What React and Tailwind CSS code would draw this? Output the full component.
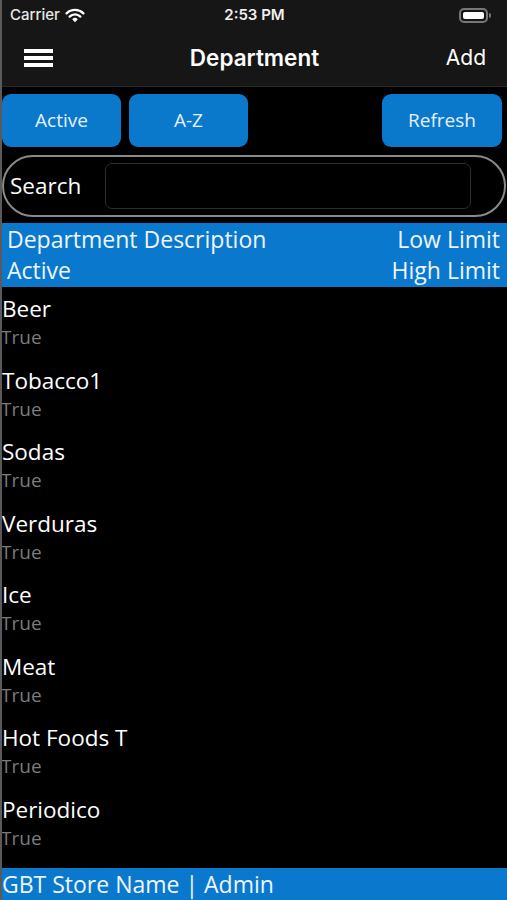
import React from "react";

const items = ["Beer", "Tobacco1", "Sodas", "Verduras", "Ice", "Meat", "Hot Foods T", "Periodico"];

export default function App() {
  return (
    <div className="w-[507px] h-[900px] bg-black text-white overflow-hidden flex flex-col border-l-2 border-[#5a5a5a]" style={{ fontFamily: '"Open Sans", "Noto Sans", sans-serif' }}>
      {/* status + nav */}
      <div className="bg-[#161616] h-[87px] flex flex-col border-b border-[#2a2a2a]" style={{ fontFamily: 'Inter, "Liberation Sans", sans-serif' }}>
        <div className="h-[30px] flex items-center px-[8px] relative">
          <div className="flex items-center gap-[5px] text-[15px] font-medium text-[#e8e8e8]">
            <span>Carrier</span>
            <svg width="20" height="15" viewBox="0 0 20 15">
              <path d="M10 14.2 L7.2 11.2 A4 4 0 0 1 12.8 11.2 Z" fill="#fff" />
              <path d="M4.6 8.6 A7.6 7.6 0 0 1 15.4 8.6" stroke="#fff" strokeWidth="2.3" fill="none" strokeLinecap="round" />
              <path d="M1.6 5.4 A12 12 0 0 1 18.4 5.4" stroke="#fff" strokeWidth="2.3" fill="none" strokeLinecap="round" />
            </svg>
          </div>
          <div className="absolute left-0 right-0 text-center text-[15px] font-semibold text-[#f0f0f0]">2:53 PM</div>
          <div className="ml-auto mr-[8px] flex items-center">
            <div className="w-[29px] h-[15px] rounded-[5px] border-2 border-[#777] p-[2px]">
              <div className="w-full h-full bg-white rounded-[2px]" />
            </div>
            <div className="w-[2px] h-[5px] bg-[#777] rounded-r-sm ml-[1px]" />
          </div>
        </div>
        <div className="flex-1 flex items-center px-[22px] relative">
          <div className="flex flex-col gap-[3px]">
            <div className="w-[29px] h-[4px] bg-white" />
            <div className="w-[29px] h-[4px] bg-white" />
            <div className="w-[29px] h-[4px] bg-white" />
          </div>
          <div className="absolute left-0 right-0 text-center text-[22.5px] font-semibold pointer-events-none">Department</div>
          <div className="ml-auto text-[21px] mr-[-1px]">Add</div>
        </div>
      </div>

      {/* buttons */}
      <div className="flex px-0 pt-[7px] gap-[8px] h-[66px]">
        <button className="w-[119px] h-[53px] bg-[#0a79cc] rounded-[9px] text-[19px] text-[#e6f0fa]">Active</button>
        <button className="w-[119px] h-[53px] bg-[#0a79cc] rounded-[9px] text-[19px] text-[#e6f0fa]">A-Z</button>
        <button className="ml-auto mr-[5px] w-[120px] h-[53px] bg-[#0a79cc] rounded-[9px] text-[19px] text-[#e6f0fa]">Refresh</button>
      </div>

      {/* search */}
      <div className="mt-[2px] h-[62px] mr-[1px] rounded-full border-2 border-[#8a8a8a] flex items-center pl-[6px] pr-[33px]">
        <span className="text-[22.5px] w-[95px]">Search</span>
        <div className="flex-1 h-[46px] rounded-[7px] border border-[#2e2e2e] bg-black" />
      </div>

      {/* header */}
      <div className="mt-[6px] h-[64px] bg-[#0a79cd] flex flex-col justify-center pl-[5px] pr-[7px] text-[23px] leading-[31px] text-[#eef5fc]">
        <div className="flex justify-between"><span>Department Description</span><span>Low Limit</span></div>
        <div className="flex justify-between"><span>Active</span><span>High Limit</span></div>
      </div>

      {/* list */}
      <div className="flex-1 flex flex-col">
        {items.map((n) => (
          <div key={n} className="h-[71.5px] flex flex-col pt-[7px]">
            <div className="text-[22.5px] leading-[30px]">{n}</div>
            <div className="text-[19px] leading-[26px] text-[#7b7b7b] -ml-[1px]">True</div>
          </div>
        ))}
      </div>

      {/* footer */}
      <div className="h-[32px] bg-[#0a79cd] flex items-center px-0 text-[23px] text-[#eef5fc]">GBT Store Name | Admin</div>
    </div>
  );
}
